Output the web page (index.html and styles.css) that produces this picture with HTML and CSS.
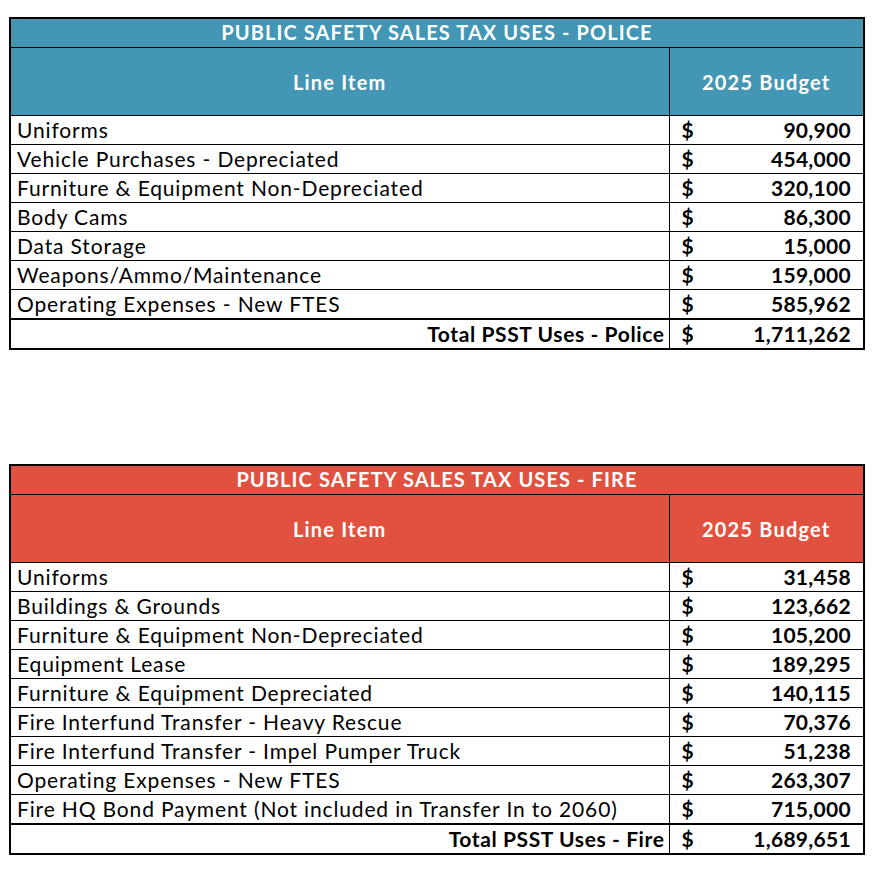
FILE: index.html
```html
<!DOCTYPE html>
<html>
<head>
<meta charset="utf-8">
<link rel="stylesheet" href="styles.css">
</head>
<body>
<div class="page">
  <table class="budget police">
    <colgroup><col class="c1"><col class="c2"></colgroup>
    <tr class="title"><th colspan="2">PUBLIC SAFETY SALES TAX USES - POLICE</th></tr>
    <tr class="head"><th>Line Item</th><th>2025 Budget</th></tr>
    <tr><td class="lbl">Uniforms</td><td class="amt"><span>$</span><span>90,900</span></td></tr>
    <tr><td class="lbl">Vehicle Purchases - Depreciated</td><td class="amt"><span>$</span><span>454,000</span></td></tr>
    <tr><td class="lbl">Furniture &amp; Equipment Non-Depreciated</td><td class="amt"><span>$</span><span>320,100</span></td></tr>
    <tr><td class="lbl">Body Cams</td><td class="amt"><span>$</span><span>86,300</span></td></tr>
    <tr><td class="lbl">Data Storage</td><td class="amt"><span>$</span><span>15,000</span></td></tr>
    <tr><td class="lbl">Weapons/Ammo/Maintenance</td><td class="amt"><span>$</span><span>159,000</span></td></tr>
    <tr><td class="lbl">Operating Expenses - New FTES</td><td class="amt"><span>$</span><span>585,962</span></td></tr>
    <tr class="total"><td class="lbl">Total PSST Uses - Police</td><td class="amt"><span>$</span><span>1,711,262</span></td></tr>
  </table>

  <table class="budget fire">
    <colgroup><col class="c1"><col class="c2"></colgroup>
    <tr class="title"><th colspan="2">PUBLIC SAFETY SALES TAX USES - FIRE</th></tr>
    <tr class="head"><th>Line Item</th><th>2025 Budget</th></tr>
    <tr><td class="lbl">Uniforms</td><td class="amt"><span>$</span><span>31,458</span></td></tr>
    <tr><td class="lbl">Buildings &amp; Grounds</td><td class="amt"><span>$</span><span>123,662</span></td></tr>
    <tr><td class="lbl">Furniture &amp; Equipment Non-Depreciated</td><td class="amt"><span>$</span><span>105,200</span></td></tr>
    <tr><td class="lbl">Equipment Lease</td><td class="amt"><span>$</span><span>189,295</span></td></tr>
    <tr><td class="lbl">Furniture &amp; Equipment Depreciated</td><td class="amt"><span>$</span><span>140,115</span></td></tr>
    <tr><td class="lbl">Fire Interfund Transfer - Heavy Rescue</td><td class="amt"><span>$</span><span>70,376</span></td></tr>
    <tr><td class="lbl">Fire Interfund Transfer - Impel Pumper Truck</td><td class="amt"><span>$</span><span>51,238</span></td></tr>
    <tr><td class="lbl">Operating Expenses - New FTES</td><td class="amt"><span>$</span><span>263,307</span></td></tr>
    <tr><td class="lbl">Fire HQ Bond Payment (Not included in Transfer In to 2060)</td><td class="amt"><span>$</span><span>715,000</span></td></tr>
    <tr class="total"><td class="lbl">Total PSST Uses - Fire</td><td class="amt"><span>$</span><span>1,689,651</span></td></tr>
  </table>
</div>
</body>
</html>
```

FILE: styles.css
```css
html, body {
  margin: 0;
  padding: 0;
  background: #ffffff;
}
.page {
  padding: 17px 0 0 9px;
  display: flex;
  flex-direction: column;
  gap: 114px;
  font-family: Lato, "Open Sans", sans-serif;
  color: #000;
}
.budget {
  border-collapse: collapse;
  table-layout: fixed;
  width: 854px;
  border: 2px solid #000;
}
.c1 { width: 659px; }
.c2 { width: 195px; }
.budget th, .budget td {
  padding: 0;
  border: 1px solid #000;
}
.title th {
  height: 26px;
  font-size: 20px;
  line-height: 22px;
  font-weight: 700;
  color: #fff;
  letter-spacing: 1.1px;
  text-align: center;
  padding-bottom: 2px;
}
.head th {
  height: 67px;
  font-size: 20px;
  font-weight: 700;
  color: #fff;
  letter-spacing: 1.2px;
  text-align: center;
}
.police .title th, .police .head th { background: #4396b4; }
.fire .title th, .fire .head th { background: #e0513f; }
.budget td {
  height: 28px;
  font-size: 21px;
  line-height: 24px;
}
.lbl {
  padding-left: 6px !important;
  letter-spacing: 0.85px;
  white-space: nowrap;
}
.amt {
  font-weight: 700;
  padding: 0 12px 0 12px !important;
}
.amt span:first-child { float: left; }
.amt span:last-child { float: right; letter-spacing: 0.3px; }
.total td { border-top-width: 2px; }
.total .lbl {
  text-align: right;
  font-weight: 700;
  letter-spacing: 0.6px;
  padding-right: 4px !important;
}
```
